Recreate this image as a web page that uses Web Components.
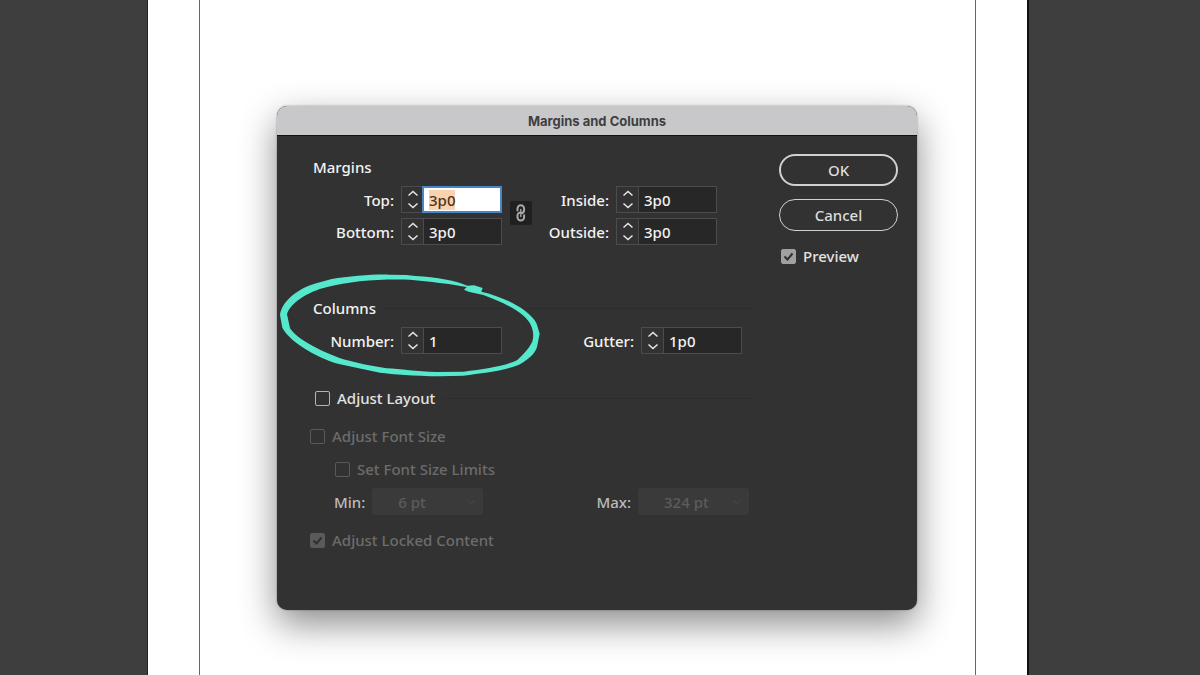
<!DOCTYPE html>
<html lang="en">
<head>
<meta charset="utf-8">
<title>Margins and Columns</title>
<style>
  body {
    margin: 0;
    font-family: "Noto Sans", "Open Sans", sans-serif;
    font-size: 15px;
    line-height: 20px;
  }
</style>
</head>
<body>
<layout-workspace>
  <app-dialog heading="Margins and Columns">
    <field-group heading="Margins">
      <link-pair>
        <number-field slot="start" label="Top:" value="3p0" active></number-field>
        <number-field slot="start" label="Bottom:" value="3p0"></number-field>
        <number-field slot="end" class="outer" label="Inside:" value="3p0"></number-field>
        <number-field slot="end" class="outer" label="Outside:" value="3p0"></number-field>
      </link-pair>
    </field-group>
    <field-group heading="Columns" ruled marked>
      <number-field label="Number:" value="1"></number-field>
      <number-field label="Gutter:" value="1p0" wide></number-field>
    </field-group>
    <adjust-layout></adjust-layout>
    <dialog-actions slot="actions"></dialog-actions>
  </app-dialog>
</layout-workspace>

<script>
class LayoutWorkspace extends HTMLElement {
  constructor() {
    super();
    this.attachShadow({ mode: 'open' }).innerHTML = `
      <style>
        :host {
          display: grid;
          grid-template-columns: 147px minmax(0, 1fr) 171px;
          min-height: 100vh;
          background: #3e3e3e;
        }
        .paper {
          grid-area: 1 / 2;
          display: flex;
          padding: 0 51px;
          background: #fff;
          border-left: 1px solid #222;
          border-right: 2px solid #111;
        }
        .guides {
          flex: 1;
          border: solid #8a4a9c;
          border-width: 0 1px;
        }
        .window {
          grid-area: 1 / 1 / 2 / 4;
          padding: 106px 6px 60px 0;
        }
      </style>
      <div class="paper"><div class="guides"></div></div>
      <div class="window"><slot></slot></div>
    `;
  }
}

class AppDialog extends HTMLElement {
  constructor() {
    super();
    this.attachShadow({ mode: 'open' }).innerHTML = `
      <style>
        :host {
          display: block;
          max-width: 640px;
          margin: 0 auto;
          border-radius: 10px;
          overflow: hidden;
          background: #323232;
          color: #f2f2f2;
          box-shadow: 0 14px 36px rgba(0, 0, 0, 0.46), 0 0 2px rgba(0, 0, 0, 0.4);
        }
        h1 {
          margin: 0;
          padding: 5px 0 4px;
          background: #c8c8ca;
          border-bottom: 1px solid #111;
          color: #3f3f41;
          font: 700 13px/20px Inter, "Liberation Sans", sans-serif;
          text-align: center;
        }
        .body {
          display: grid;
          grid-template-columns: minmax(0, 1fr) 119px;
          gap: 27px;
          padding: 18px 19px 60px 33px;
        }
        .main { padding-top: 3px; }
      </style>
      <h1></h1>
      <div class="body">
        <div class="main"><slot></slot></div>
        <slot name="actions"></slot>
      </div>
    `;
  }
  connectedCallback() {
    this.shadowRoot.querySelector('h1').textContent = this.getAttribute('heading');
  }
}

class FieldGroup extends HTMLElement {
  constructor() {
    super();
    this.attachShadow({ mode: 'open' }).innerHTML = `
      <style>
        :host { display: block; position: relative; margin-bottom: 53px; }
        :host([marked]) { margin-bottom: 34px; }
        h2 {
          display: flex;
          align-items: center;
          gap: 8px;
          margin: 0 0 9px;
          padding-left: 3px;
          font-size: 15px;
          line-height: 20px;
          font-weight: 500;
        }
        :host([ruled]) h2::after {
          content: "";
          flex: 1;
          height: 1px;
          background: #2d2d2d;
        }
        .fields { display: flex; }
        /* hand-drawn ring lying over the group */
        svg {
          display: none;
          position: absolute;
          left: -40px;
          top: -33px;
          pointer-events: none;
        }
        :host([marked]) svg { display: block; }
      </style>
      <h2></h2>
      <div class="fields"><slot></slot></div>
      <svg width="280" height="120" viewBox="0 0 840 360" fill="#56e8cc" fill-rule="evenodd" aria-hidden="true">
        <path d="M30 150C35 108 88 66 150 52L185 42C240 32 330 26 360 29L410 30L436 33C500 36 560 48 592 62L612 61L638 69L634 80C700 95 778 133 800 176L809 206L803 236C800 262 780 280 747 299C700 318 640 324 580 332L510 334C430 332 370 328 330 323L210 298C130 275 55 225 37 188Z
          M51 148C58 118 110 80 172 66C240 48 330 41 420 44C480 50 540 56 590 66L582 74L596 80L640 90C680 105 730 125 762 154C790 178 794 210 786 232C776 252 762 266 742 285C710 302 650 312 580 320L500 321C440 320 390 312 350 310C300 302 260 294 220 283C150 258 82 224 60 190Z"/>
      </svg>
    `;
  }
  connectedCallback() {
    this.shadowRoot.querySelector('h2').textContent = this.getAttribute('heading');
  }
}

class LinkPair extends HTMLElement {
  constructor() {
    super();
    this.attachShadow({ mode: 'open' }).innerHTML = `
      <style>
        :host { display: flex; }
        .stack { display: grid; gap: 5px; }
        ::slotted(.outer) { --label-width: 77px; }
        button {
          display: grid;
          place-items: center;
          width: 22px;
          height: 24px;
          margin: 15px 0 0 8px;
          padding: 0;
          border: 0;
          border-radius: 2px;
          background: #202020;
        }
      </style>
      <div class="stack"><slot name="start"></slot></div>
      <button type="button" aria-label="Make all settings the same">
        <svg width="12" height="18" viewBox="0 0 12 18" fill="none" stroke="#a8a8a8" stroke-width="2" stroke-linecap="round">
          <path d="M2.5 6.5V4.5a3.3 3.3 0 0 1 6.6 0v1.6a3.2 3.2 0 0 1-3.1 3.2"/>
          <path d="M9.1 11.2v2a3.3 3.3 0 0 1-6.6 0v-1.4A3.2 3.2 0 0 1 5.7 8.4"/>
          <path d="M5.8 5.5v1.7M5.8 10.8v1.8" stroke-width="1.4"/>
        </svg>
      </button>
      <div class="stack"><slot name="end"></slot></div>
    `;
  }
}

class NumberField extends HTMLElement {
  constructor() {
    super();
    this.attachShadow({ mode: 'open' }).innerHTML = `
      <style>
        :host { display: flex; align-items: center; gap: 7px; }
        :host([wide]) { --label-width: 132px; }
        label {
          width: var(--label-width, 84px);
          text-align: right;
          font-weight: 500;
          white-space: nowrap;
        }
        .control {
          box-sizing: border-box;
          display: flex;
          width: 101px;
          height: 27px;
          border: 1px solid #4c4c4c;
        }
        .steps { display: grid; flex: 0 0 21px; }
        button {
          display: grid;
          place-items: center;
          padding: 0;
          border: 0;
          background: none;
        }
        svg { display: block; }
        input {
          box-sizing: border-box;
          flex: 1;
          min-width: 0;
          padding: 0 5px;
          border: 0;
          border-left: 1px solid #4c4c4c;
          border-radius: 0;
          outline: 0;
          background: #272727;
          color: #f2f2f2;
          font: inherit;
          font-weight: 500;
        }
        :host([active]) input {
          margin: -1px;
          border: 2px solid #4a86c5;
          background: #fff;
          color: #4b3425;
        }
        input::selection { background: #fad2b0; color: #4b3425; }
      </style>
      <label for="box"></label>
      <div class="control">
        <div class="steps">
          <button type="button" aria-label="Increase">
            <svg width="12" height="7" viewBox="0 0 12 7" fill="none" stroke="#e8e8e8" stroke-width="1.5"><path d="M1.5 5.5L6 1.5l4.5 4"/></svg>
          </button>
          <button type="button" aria-label="Decrease">
            <svg width="12" height="7" viewBox="0 0 12 7" fill="none" stroke="#e8e8e8" stroke-width="1.5"><path d="M1.5 1.5L6 5.5l4.5-4"/></svg>
          </button>
        </div>
        <input id="box" type="text">
      </div>
    `;
  }
  connectedCallback() {
    const box = this.shadowRoot.querySelector('input');
    this.shadowRoot.querySelector('label').textContent = this.getAttribute('label');
    box.value = this.getAttribute('value');
    if (this.hasAttribute('active')) {
      box.focus();
      box.select();
    }
  }
}

class CheckBox extends HTMLElement {
  constructor() {
    super();
    this.attachShadow({ mode: 'open' }).innerHTML = `
      <style>
        :host { display: flex; color: #e2e2e2; }
        :host([disabled]) { color: #6c6c6c; }
        label {
          display: flex;
          align-items: center;
          gap: 7px;
          font-weight: 500;
          white-space: nowrap;
        }
        .box { display: grid; }
        input, svg { grid-area: 1 / 1; }
        input {
          appearance: none;
          box-sizing: border-box;
          width: 15px;
          height: 15px;
          margin: 0;
          border: 1px solid #b4b4b4;
          border-radius: 2px;
        }
        input:disabled { border-color: #5a5a5a; }
        input:checked { background: #a0a0a0; border-color: #a0a0a0; }
        input:checked:disabled { background: #5a5a5a; border-color: #5a5a5a; }
        svg { visibility: hidden; pointer-events: none; }
        input:checked + svg { visibility: visible; }
      </style>
      <label>
        <span class="box">
          <input type="checkbox">
          <svg width="15" height="15" viewBox="0 0 15 15" fill="none" stroke="#303030" stroke-width="2"><path d="M3.5 7.5l3 3L11.5 4.5"/></svg>
        </span>
        <slot></slot>
      </label>
    `;
  }
  connectedCallback() {
    const box = this.shadowRoot.querySelector('input');
    box.checked = this.hasAttribute('checked');
    box.disabled = this.hasAttribute('disabled');
  }
}

class SizeSelect extends HTMLElement {
  constructor() {
    super();
    this.attachShadow({ mode: 'open' }).innerHTML = `
      <style>
        :host { display: flex; align-items: center; gap: 7px; color: #bcbcbc; }
        label { font-weight: 500; }
        .control { display: grid; align-items: center; }
        select, svg { grid-area: 1 / 1; }
        select {
          appearance: none;
          width: 111px;
          height: 27px;
          padding: 0 26px;
          border: 0;
          border-radius: 3px;
          background: #3a3a3a;
          color: #5c5c5c;
          opacity: 1;
          font: inherit;
          font-weight: 500;
        }
        svg { justify-self: end; margin-right: 8px; }
      </style>
      <label for="size"></label>
      <div class="control">
        <select id="size" disabled><option></option></select>
        <svg width="8" height="6" viewBox="0 0 8 6" fill="none" stroke="#4c4c4c"><path d="M1 1.5l3 3 3-3"/></svg>
      </div>
    `;
  }
  connectedCallback() {
    this.shadowRoot.querySelector('label').textContent = this.getAttribute('label');
    this.shadowRoot.querySelector('option').textContent = this.getAttribute('value');
  }
}

class AdjustLayout extends HTMLElement {
  constructor() {
    super();
    this.attachShadow({ mode: 'open' }).innerHTML = `
      <style>
        :host { display: block; }
        .head {
          display: flex;
          align-items: center;
          gap: 8px;
          padding-left: 5px;
          margin-bottom: 18px;
        }
        .head::after {
          content: "";
          flex: 1;
          height: 1px;
          background: #2d2d2d;
        }
        .limits { margin: 13px 0 15px 25px; }
        .sizes {
          display: flex;
          justify-content: space-between;
          margin: 9px 3px 0 -1px;
        }
      </style>
      <div class="head"><check-box>Adjust Layout</check-box></div>
      <check-box disabled>Adjust Font Size</check-box>
      <div class="limits">
        <check-box disabled>Set Font Size Limits</check-box>
        <div class="sizes">
          <size-select label="Min:" value="6 pt"></size-select>
          <size-select label="Max:" value="324 pt"></size-select>
        </div>
      </div>
      <check-box disabled checked>Adjust Locked Content</check-box>
    `;
  }
}

class DialogActions extends HTMLElement {
  constructor() {
    super();
    this.attachShadow({ mode: 'open' }).innerHTML = `
      <style>
        :host { display: flex; flex-direction: column; gap: 13px; }
        button {
          height: 32px;
          padding: 0;
          border: 1px solid #d0d0d0;
          border-radius: 16px;
          background: none;
          color: #dcdcdc;
          font: inherit;
          font-weight: 500;
        }
        .primary { border-width: 2px; }
        check-box { margin: 2px 0 0 2px; }
      </style>
      <button type="submit" class="primary">OK</button>
      <button type="button">Cancel</button>
      <check-box checked>Preview</check-box>
    `;
  }
}

customElements.define('layout-workspace', LayoutWorkspace);
customElements.define('app-dialog', AppDialog);
customElements.define('field-group', FieldGroup);
customElements.define('link-pair', LinkPair);
customElements.define('number-field', NumberField);
customElements.define('check-box', CheckBox);
customElements.define('size-select', SizeSelect);
customElements.define('adjust-layout', AdjustLayout);
customElements.define('dialog-actions', DialogActions);
</script>
</body>
</html>
